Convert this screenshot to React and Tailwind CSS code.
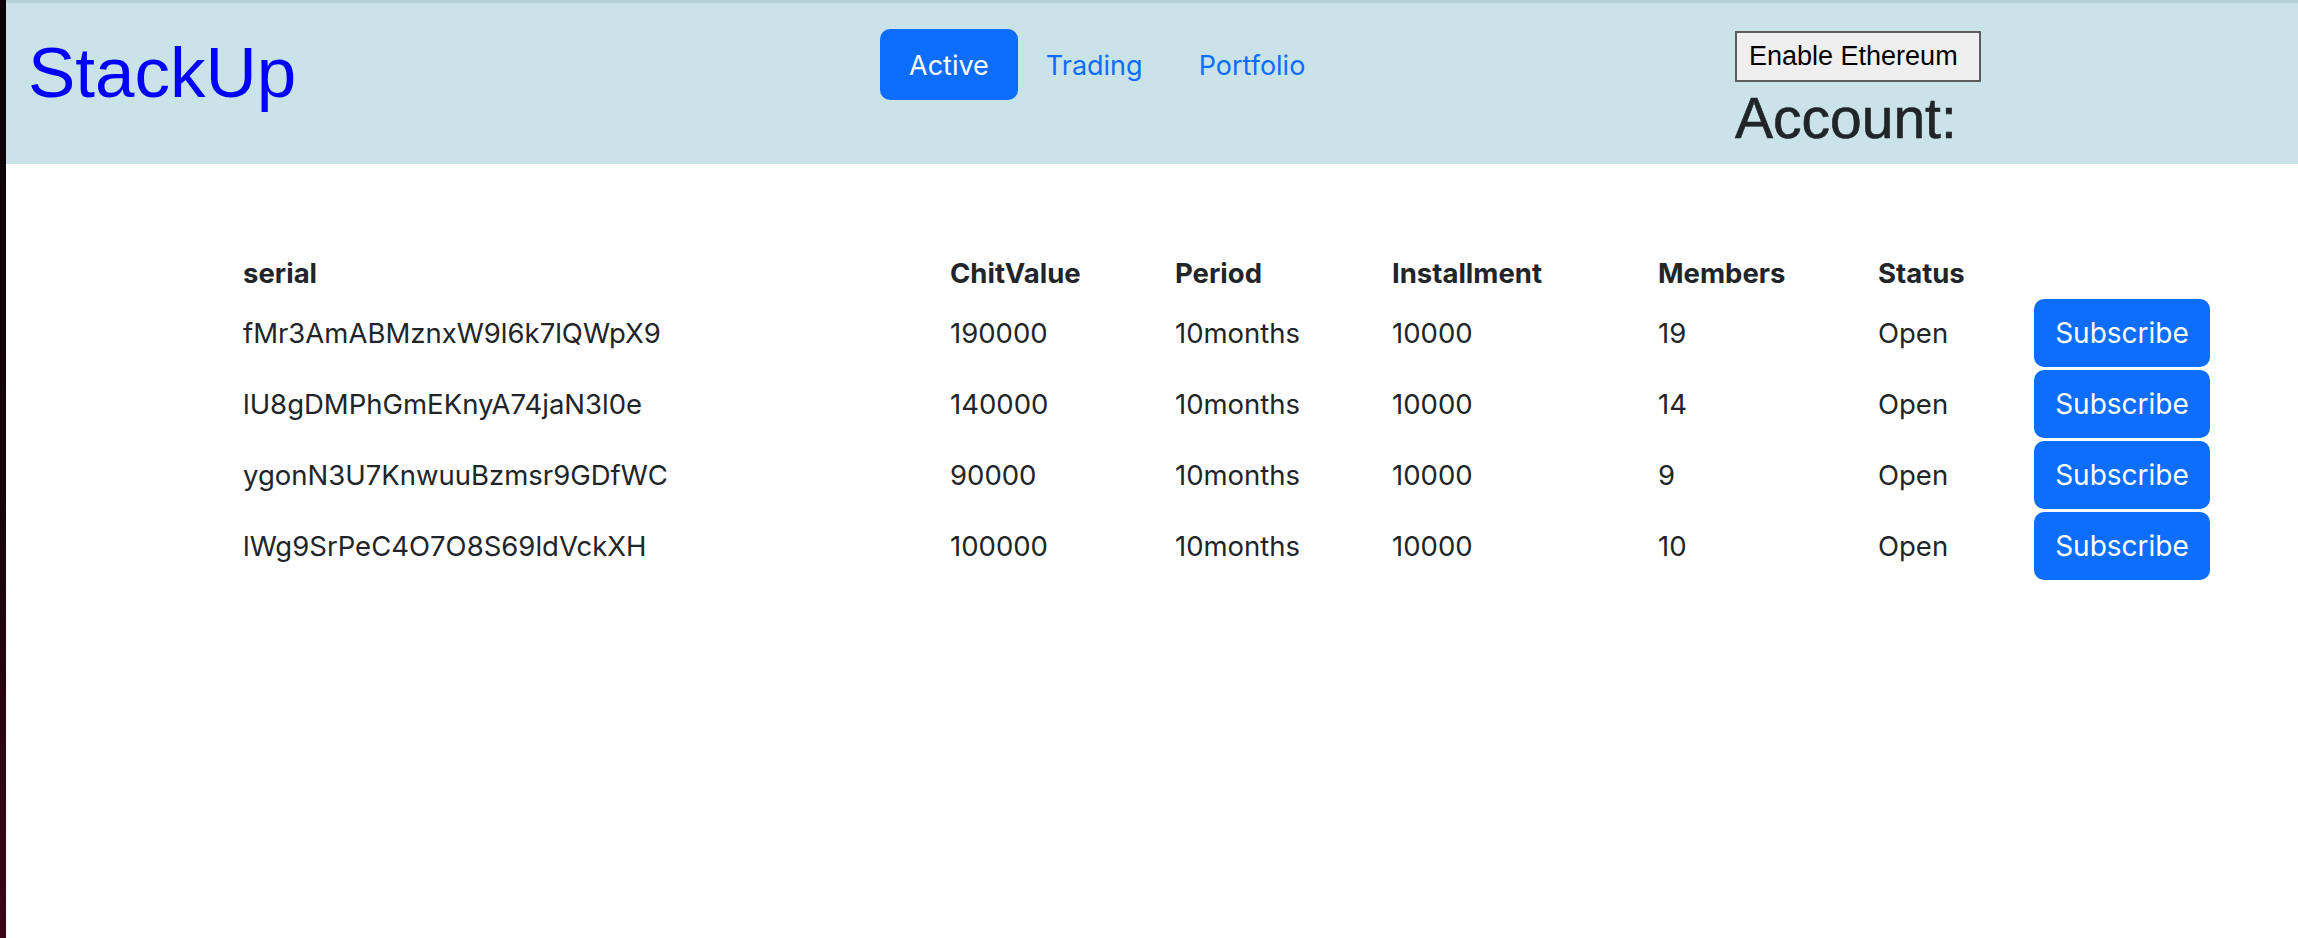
import React from 'react';

const chits = [
  { serial: 'fMr3AmABMznxW9l6k7lQWpX9', value: '190000', period: '10months', installment: '10000', members: '19', status: 'Open' },
  { serial: 'lU8gDMPhGmEKnyA74jaN3l0e', value: '140000', period: '10months', installment: '10000', members: '14', status: 'Open' },
  { serial: 'ygonN3U7KnwuuBzmsr9GDfWC', value: '90000', period: '10months', installment: '10000', members: '9', status: 'Open' },
  { serial: 'lWg9SrPeC4O7O8S69ldVckXH', value: '100000', period: '10months', installment: '10000', members: '10', status: 'Open' },
];

const cols = 'grid grid-cols-[707px_225px_217px_266px_220px_156px_176px]';

function Header() {
  return (
    <header className="h-[164px] bg-[#c9e3e8] border-t-[3px] border-[#b4d1d7] flex items-start">
      {/* Brand */}
      <div className="w-[874px] shrink-0 pl-[22px] pt-[34px]">
        <h1 className="font-['Liberation_Sans',Arial,sans-serif] text-[71px] leading-none text-[#0000ff]">StackUp</h1>
      </div>

      {/* Tabs */}
      <nav className="w-[855px] shrink-0 pt-[26px] flex items-center text-[27px] font-['Inter',sans-serif]">
        <a className="h-[71px] px-[29px] pt-[3px] rounded-[10px] bg-[#0d6efd] text-white flex items-center">Active</a>
        <a className="h-[71px] px-[28px] pt-[3px] text-[#0d6efd] flex items-center">Trading</a>
        <a className="h-[71px] px-[28px] pt-[3px] text-[#0d6efd] flex items-center">Portfolio</a>
      </nav>

      {/* Wallet */}
      <div className="pt-[28px] flex flex-col items-start font-['Liberation_Sans',Arial,sans-serif]">
        <button className="h-[51px] w-[246px] border-2 border-[#5c5c5c] bg-[#efefef] text-black text-[27px] leading-none px-[12px] text-left">
          Enable Ethereum
        </button>
        <div className="mt-[8px] text-[57px] leading-none text-[#212529] [-webkit-text-stroke:0.6px_#212529]">Account:</div>
      </div>
    </header>
  );
}

function ChitTable() {
  return (
    <div className="pl-[237px] pt-[88px] font-['Inter',sans-serif] text-[27.5px] text-[#212529]">
      <div className={`${cols} h-[42px] items-center font-bold leading-[42px] mb-[3px]`}>
        <div>serial</div>
        <div>ChitValue</div>
        <div>Period</div>
        <div>Installment</div>
        <div>Members</div>
        <div>Status</div>
        <div></div>
      </div>
      {chits.map((c) => (
        <div key={c.serial} className={`${cols} h-[71px] items-center leading-[42px]`}>
          <div>{c.serial}</div>
          <div>{c.value}</div>
          <div>{c.period}</div>
          <div>{c.installment}</div>
          <div>{c.members}</div>
          <div>{c.status}</div>
          <div>
            <button className="h-[68px] w-[176px] rounded-[10px] bg-[#0d6efd] text-white text-[28px] flex items-center justify-center">
              Subscribe
            </button>
          </div>
        </div>
      ))}
    </div>
  );
}

export default function App() {
  return (
    <div className="flex h-[938px] w-full overflow-hidden">
      <div className="w-[6px] shrink-0 bg-gradient-to-b from-[#0b0306] via-[#150309] to-[#3a0618]"></div>
      <div className="flex-1 bg-white">
        <Header />
        <ChitTable />
      </div>
    </div>
  );
}
